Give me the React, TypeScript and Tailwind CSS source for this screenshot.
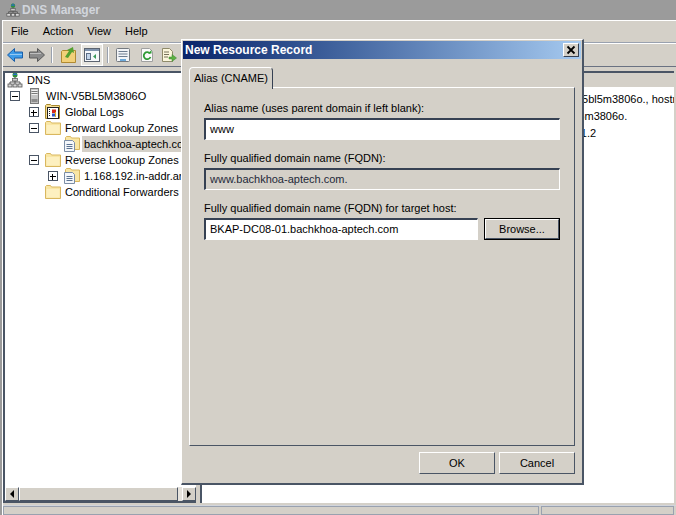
import type { ReactNode } from 'react'

const MENU = ['File', 'Action', 'View', 'Help']

const RECORDS = [
  { name: '(same as parent folder)', type: 'Start of Authority (SOA)', data: '[5], win-v5bl5m3806o., hostmaster.' },
  { name: '(same as parent folder)', type: 'Name Server (NS)', data: 'win-v5bl5m3806o.' },
  { name: 'www2', type: 'Host (A)', data: '192.168.1.2' },
]

function DnsIcon({ className = 'size-4' }: { className?: string }) {
  return (
    <svg viewBox="0 0 16 16" className={`${className} shrink-0`}>
      <circle cx="8" cy="3" r="2.500" fill="#2f8f3a" />
      <path d="M6 2.500h4M8 .6v2" stroke="#2a6fc9" strokeWidth="1.200" />
      <path d="M8 5v4M3 12v-2h10v2M8 9v3" fill="none" stroke="#555" />
      <rect x="5.500" y="6.500" width="5" height="2.500" fill="#c8c8c8" stroke="#555" strokeWidth=".7" />
      <rect x="1" y="12" width="4" height="3" fill="#d8d8d8" stroke="#555" strokeWidth=".8" />
      <rect x="6" y="12" width="4" height="3" fill="#d8d8d8" stroke="#555" strokeWidth=".8" />
      <rect x="11" y="12" width="4" height="3" fill="#d8d8d8" stroke="#555" strokeWidth=".8" />
    </svg>
  )
}

function ServerIcon() {
  return (
    <svg viewBox="0 0 16 16" className="size-4 shrink-0">
      <rect x="4.500" y="0.500" width="8" height="15" fill="#c4c4c4" stroke="#7a7a7a" />
      <path d="M5.500 2.500h6M5.500 4.500h6M5.500 6.500h6" stroke="#f2f2f2" />
      <path d="M5.500 3.500h6M5.500 5.500h6" stroke="#7a7a7a" />
      <rect x="5.500" y="11" width="6" height="3" fill="#8c8c8c" />
    </svg>
  )
}

function FolderIcon() {
  return (
    <svg viewBox="0 0 16 16" className="size-4 shrink-0">
      <path d="M.5 14.500v-12l1-1h4l1 1.500h9v11.500z" fill="#f9e6a4" stroke="#d9b75f" />
      <path d="M1.500 13.500v-8.500h13v8.500z" fill="#fdf0c0" />
    </svg>
  )
}

function ZoneIcon() {
  return (
    <svg viewBox="0 0 16 16" className="size-4 shrink-0">
      <path d="M1.500 13.500v-12l1-1h4l1 1.500h8v11.500z" fill="#f9e6a4" stroke="#d9b75f" />
      <path d="M.5 4.500h8l2 2v9H.5z" fill="#f4f7fb" stroke="#7c8ea6" />
      <path d="M2.500 8.500h6M2.500 10.500h6M2.500 12.500h6" stroke="#5c7392" />
    </svg>
  )
}

function LogsIcon() {
  return (
    <svg viewBox="0 0 16 16" className="size-4 shrink-0">
      <path d="M.5 14.500v-13l1-1h4l1 1h8v13z" fill="#f7dd8f" stroke="#a88a30" />
      <rect x="2.500" y="3.500" width="11" height="11" fill="#fff" stroke="#222" />
      <path d="M4.500 5v8" stroke="#222" strokeDasharray="1 1" />
      <path d="M7 5.500h4v3.500H7z" fill="#d52b1e" />
      <path d="M7 9.500h4v3H7z" fill="#2b55c9" />
      <path d="M10.500 8v5" stroke="#e0b520" />
    </svg>
  )
}

function ArrowIcon({ dir, color, edge }: { dir: 'left' | 'right'; color: string; edge: string }) {
  return (
    <svg viewBox="0 0 16 14" className="h-3.5 w-4">
      <path
        d={dir === 'left' ? 'M.5 7l7-6.500v3.500h8v6h-8v3.500z' : 'M15.500 7l-7-6.500v3.500h-8v6h8v3.500z'}
        fill={color}
        stroke={edge}
      />
      <path d={dir === 'left' ? 'M3 6.500h12' : 'M1 5.500h11'} stroke="#fff" strokeOpacity=".45" />
    </svg>
  )
}

function UpFolderIcon() {
  return (
    <svg viewBox="0 0 16 16" className="size-4">
      <path d="M.5 15.500v-11l1-1h13v12z" fill="#f2d079" stroke="#b08a32" />
      <path d="M4 10l4-6-2-1 6-3 1 6-2-1-4 6z" fill="#55a02f" />
    </svg>
  )
}

function TreeToggleIcon() {
  return (
    <svg viewBox="0 0 18 16" className="h-4 w-4.5">
      <rect x="1.500" y="1.500" width="15" height="13" fill="#f6f8fb" stroke="#5c6470" />
      <path d="M2 2h14v2H2z" fill="#7f93ad" />
      <rect x="3.500" y="6.500" width="4" height="6" fill="#c3d5ea" stroke="#5c6e86" />
      <path d="M13 7v5l-3-2.500z" fill="#3a9a5c" />
    </svg>
  )
}

function PropsIcon() {
  return (
    <svg viewBox="0 0 16 16" className="size-4">
      <rect x="1.500" y="1.500" width="13" height="13" rx="1" fill="#f2f4f7" stroke="#74797f" />
      <path d="M3.500 4.500h9M3.500 7h9M3.500 9.500h9" stroke="#6d7c90" />
      <path d="M5 13h6" stroke="#3d8fd1" strokeWidth="1.500" />
    </svg>
  )
}

function RefreshIcon() {
  return (
    <svg viewBox="0 0 16 16" className="size-4">
      <path d="M2.500 1.500h8l3 3v10h-11z" fill="#fafafa" stroke="#a0a0a0" />
      <path d="M11 6.500A3.500 3.500 0 1 0 11.500 10" fill="none" stroke="#2f9a35" strokeWidth="1.800" />
      <path d="M9 6.500h3.500V3z" fill="#2f9a35" />
    </svg>
  )
}

function ExportIcon() {
  return (
    <svg viewBox="0 0 16 16" className="size-4">
      <path d="M1.500 1.500h7l3 3v10h-10z" fill="#fbf6dc" stroke="#8f8a6a" />
      <path d="M3 5h5M3 7.500h5M3 10h4" stroke="#77715a" />
      <path d="M8 10h3V7.500l4.500 3.500-4.500 3.500V12H8z" fill="#5cb043" stroke="#3f8430" strokeWidth=".5" />
    </svg>
  )
}

function ExpandBox({ open }: { open: boolean }) {
  return (
    <span className="flex size-2.5 items-center justify-center border border-gray-600 bg-white">
      <span className="relative block h-px w-1.5 bg-black">
        {!open && <span className="absolute -top-0.5 left-0.5 block h-1.5 w-px bg-black" />}
      </span>
    </span>
  )
}

function TreeRow({
  level,
  box,
  icon,
  label,
  selected,
}: {
  level: number
  box?: 'open' | 'closed'
  icon: ReactNode
  label: string
  selected?: boolean
}) {
  return (
    <div className="flex h-4 items-center" style={{ paddingLeft: 3 + 19 * level }}>
      <span className="flex w-4.5 shrink-0 pl-0.5">{box && <ExpandBox open={box === 'open'} />}</span>
      {icon}
      <span className={`ml-0.5 whitespace-nowrap px-0.5 leading-4 ${selected ? 'bg-[#d4d0c8]' : ''}`}>{label}</span>
    </div>
  )
}

function BevelButton({ children, isDefault }: { children: ReactNode; isDefault?: boolean }) {
  return (
    <div className={`w-19 ${isDefault ? 'border border-black' : ''}`}>
      <button
        className={`flex w-full items-center justify-center border border-t-white border-l-white border-r-gray-600 border-b-gray-600 bg-[#d4d0c8] ${isDefault ? 'h-5' : 'h-5.5'}`}
      >
        {children}
      </button>
    </div>
  )
}

function Field({ value, disabled, className }: { value: string; disabled?: boolean; className?: string }) {
  return (
    <div
      className={`flex h-5.5 items-center border border-t-2 border-l-2 border-t-gray-700 border-l-gray-700 border-r-white border-b-white px-1 ${
        disabled ? 'bg-[#d4d0c8] text-gray-800' : 'bg-white'
      } ${className ?? ''}`}
    >
      {value}
    </div>
  )
}

function ResourceDialog() {
  return (
    <div className="absolute left-[181px] top-[39px] flex h-[446px] w-[403px] flex-col border border-t-white border-l-white border-r-2 border-b-2 border-r-gray-600 border-b-gray-600 bg-[#d4d0c8] p-px">
      <div className="flex h-4.5 items-center justify-between bg-linear-to-r from-[#0a246a] to-[#a6caf0] pl-0.5 pr-0.5">
        <span className="text-xs font-bold text-white">New Resource Record</span>
        <span className="flex h-3.5 w-4 items-center justify-center border border-t-white border-l-white border-r-gray-700 border-b-gray-700 bg-[#d4d0c8]">
          <svg viewBox="0 0 10 10" className="size-2.5">
            <path d="M1.500 1.500l7 7M8.500 1.500l-7 7" stroke="#000" strokeWidth="1.800" />
          </svg>
        </span>
      </div>
      <div className="flex flex-1 flex-col px-1.5 pt-2">
        <div className="relative z-10 -mb-0.5 flex h-5.5 w-21 items-center justify-center rounded-t-sm border border-b-0 border-t-white border-l-white border-r-gray-700 bg-[#d4d0c8]">
          Alias (CNAME)
        </div>
        <div className="flex h-[359px] flex-col border border-t-white border-l-white border-r-gray-600 border-b-gray-600 px-3.5 pt-3">
          <label className="leading-4">Alias name (uses parent domain if left blank):</label>
          <Field value="www" className="mt-0.5" />
          <label className="mt-2.5 leading-4">Fully qualified domain name (FQDN):</label>
          <Field value="www.bachkhoa-aptech.com." disabled className="mt-0.5" />
          <label className="mt-2.5 leading-4">Fully qualified domain name (FQDN) for target host:</label>
          <div className="mt-0.5 flex gap-1.5">
            <Field value="BKAP-DC08-01.bachkhoa-aptech.com" className="flex-1" />
            <BevelButton isDefault>Browse...</BevelButton>
          </div>
        </div>
        <div className="mt-1.5 flex justify-end gap-1">
          <BevelButton>OK</BevelButton>
          <BevelButton>Cancel</BevelButton>
        </div>
      </div>
    </div>
  )
}

function ScrollButton({ dir }: { dir: 'left' | 'right' }) {
  return (
    <span className="flex h-full w-3.5 shrink-0 items-center justify-center border border-t-white border-l-white border-r-gray-600 border-b-gray-600 bg-[#d4d0c8]">
      <svg viewBox="0 0 6 8" className="h-2 w-1.5">
        <path d={dir === 'left' ? 'M5 0v8L1 4z' : 'M1 0v8l4-4z'} fill="#000" />
      </svg>
    </span>
  )
}

export default function App() {
  return (
    <div
      className="relative flex h-screen w-full flex-col overflow-hidden bg-[#9b9b9b] text-[11px] text-black"
      style={{ fontFamily: '"Liberation Sans", sans-serif' }}
    >
      <div className="flex h-5 items-center gap-0.5 pl-1.5">
        <DnsIcon className="size-3.5" />
        <span className="text-xs font-bold text-gray-300">DNS Manager</span>
      </div>

      <div className="ml-0.5 flex flex-1 flex-col border-t border-l border-white bg-[#d4d0c8]">
        <nav className="flex h-5.5 items-center gap-3.5 border-b border-gray-400 pl-2">
          {MENU.map((item) => (
            <span key={item}>{item}</span>
          ))}
        </nav>

        <div className="flex h-6 items-center border-t border-b border-t-white border-b-gray-500 pl-1">
          <ArrowIcon dir="left" color="#3d9be8" edge="#1c5fa8" />
          <span className="ml-1.5"><ArrowIcon dir="right" color="#8b8b8b" edge="#5a5a5a" /></span>
          <span className="ml-1.5 h-4 w-0.5 border-l border-r border-l-gray-400 border-r-white" />
          <span className="ml-2"><UpFolderIcon /></span>
          <span className="ml-1 flex size-5.5 items-center justify-center border border-white bg-[#e8e6e0]">
            <TreeToggleIcon />
          </span>
          <span className="ml-1 h-4 w-0.5 border-l border-r border-l-gray-400 border-r-white" />
          <span className="ml-1.5"><PropsIcon /></span>
          <span className="ml-2"><RefreshIcon /></span>
          <span className="ml-1.5"><ExportIcon /></span>
        </div>

        <div className="mt-1 flex min-h-0 flex-1 gap-1 pb-0.5 pr-0.5">
          <div className="flex w-[193px] flex-col border-t-2 border-l-2 border-gray-600 bg-white">
            <div className="flex-1 overflow-hidden">
              <div className="mb-px flex h-3.5 items-center pl-0.5">
                <DnsIcon />
                <span className="ml-1 leading-4">DNS</span>
              </div>
              <TreeRow level={0} box="open" icon={<ServerIcon />} label="WIN-V5BL5M3806O" />
              <TreeRow level={1} box="closed" icon={<LogsIcon />} label="Global Logs" />
              <TreeRow level={1} box="open" icon={<FolderIcon />} label="Forward Lookup Zones" />
              <TreeRow level={2} icon={<ZoneIcon />} label="bachkhoa-aptech.com" selected />
              <TreeRow level={1} box="open" icon={<FolderIcon />} label="Reverse Lookup Zones" />
              <TreeRow level={2} box="closed" icon={<ZoneIcon />} label="1.168.192.in-addr.arpa" />
              <TreeRow level={1} icon={<FolderIcon />} label="Conditional Forwarders" />
            </div>
            <div className="flex h-4 border-b-2 border-gray-600 bg-[#e6e3dd]">
              <ScrollButton dir="left" />
              <span className="flex-1 border border-t-white border-l-white border-r-gray-600 border-b-gray-600 bg-[#d4d0c8]" />
              <span className="w-1" />
              <ScrollButton dir="right" />
            </div>
          </div>

          <div className="flex-1 overflow-hidden border-t-2 border-l-2 border-gray-600 bg-white">
            <div className="flex h-3.5 items-center bg-[#d4d0c8] pl-1">
              <span className="w-40">Name</span>
              <span className="w-43">Type</span>
              <span>Data</span>
            </div>
            <div className="mt-1 flex flex-col gap-px pl-1">
              {RECORDS.map((record) => (
                <div key={record.type} className="flex h-4 items-center whitespace-nowrap">
                  <span className="w-40 shrink-0">{record.name}</span>
                  <span className="w-43 shrink-0">{record.type}</span>
                  <span>{record.data}</span>
                </div>
              ))}
            </div>
          </div>
        </div>

        <div className="flex h-2.5 gap-0.5 border-t border-gray-300 pr-0.5">
          <span className="flex-1 border border-gray-400" />
          <span className="w-[133px] border border-gray-400" />
        </div>
      </div>

      <ResourceDialog />
    </div>
  )
}
